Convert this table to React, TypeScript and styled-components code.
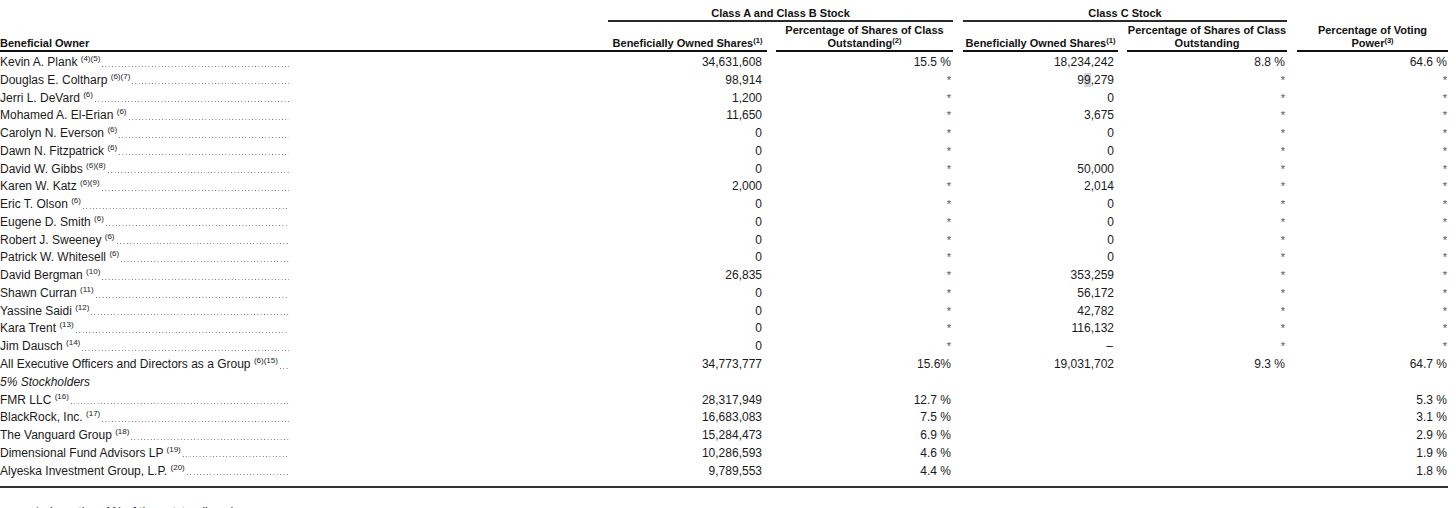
import styled, { createGlobalStyle } from 'styled-components'

const GlobalStyle = createGlobalStyle`
  html, body {
    margin: 0;
    padding: 0;
    background: #ffffff;
  }
  body {
    font-family: "Liberation Sans", Arial, sans-serif;
    color: #1a1a1a;
  }
`

const COLUMNS = '608px 159px 186px 165px 169px 161px'

type Holder = {
  name: string
  notes?: string
  a?: string
  aPct?: string
  c?: string
  cPct?: string
  vote?: string
  italic?: boolean
  mark?: boolean
}

const holders: Holder[] = [
  { name: 'Kevin A. Plank', notes: '(4)(5)', a: '34,631,608', aPct: '15.5 %', c: '18,234,242', cPct: '8.8 %', vote: '64.6 %' },
  { name: 'Douglas E. Coltharp', notes: '(6)(7)', a: '98,914', aPct: '*', c: '99,279', cPct: '*', vote: '*', mark: true },
  { name: 'Jerri L. DeVard', notes: '(6)', a: '1,200', aPct: '*', c: '0', cPct: '*', vote: '*' },
  { name: 'Mohamed A. El-Erian', notes: '(6)', a: '11,650', aPct: '*', c: '3,675', cPct: '*', vote: '*' },
  { name: 'Carolyn N. Everson', notes: '(6)', a: '0', aPct: '*', c: '0', cPct: '*', vote: '*' },
  { name: 'Dawn N. Fitzpatrick', notes: '(6)', a: '0', aPct: '*', c: '0', cPct: '*', vote: '*' },
  { name: 'David W. Gibbs', notes: '(6)(8)', a: '0', aPct: '*', c: '50,000', cPct: '*', vote: '*' },
  { name: 'Karen W. Katz', notes: '(6)(9)', a: '2,000', aPct: '*', c: '2,014', cPct: '*', vote: '*' },
  { name: 'Eric T. Olson', notes: '(6)', a: '0', aPct: '*', c: '0', cPct: '*', vote: '*' },
  { name: 'Eugene D. Smith', notes: '(6)', a: '0', aPct: '*', c: '0', cPct: '*', vote: '*' },
  { name: 'Robert J. Sweeney', notes: '(6)', a: '0', aPct: '*', c: '0', cPct: '*', vote: '*' },
  { name: 'Patrick W. Whitesell', notes: '(6)', a: '0', aPct: '*', c: '0', cPct: '*', vote: '*' },
  { name: 'David Bergman', notes: '(10)', a: '26,835', aPct: '*', c: '353,259', cPct: '*', vote: '*' },
  { name: 'Shawn Curran', notes: '(11)', a: '0', aPct: '*', c: '56,172', cPct: '*', vote: '*' },
  { name: 'Yassine Saidi', notes: '(12)', a: '0', aPct: '*', c: '42,782', cPct: '*', vote: '*' },
  { name: 'Kara Trent', notes: '(13)', a: '0', aPct: '*', c: '116,132', cPct: '*', vote: '*' },
  { name: 'Jim Dausch', notes: '(14)', a: '0', aPct: '*', c: '–', cPct: '*', vote: '*' },
  { name: 'All Executive Officers and Directors as a Group', notes: '(6)(15)', a: '34,773,777', aPct: '15.6%', c: '19,031,702', cPct: '9.3 %', vote: '64.7 %' },
  { name: '5% Stockholders', italic: true },
  { name: 'FMR LLC', notes: '(16)', a: '28,317,949', aPct: '12.7 %', vote: '5.3 %' },
  { name: 'BlackRock, Inc.', notes: '(17)', a: '16,683,083', aPct: '7.5 %', vote: '3.1 %' },
  { name: 'The Vanguard Group', notes: '(18)', a: '15,284,473', aPct: '6.9 %', vote: '2.9 %' },
  { name: 'Dimensional Fund Advisors LP', notes: '(19)', a: '10,286,593', aPct: '4.6 %', vote: '1.9 %' },
  { name: 'Alyeska Investment Group, L.P.', notes: '(20)', a: '9,789,553', aPct: '4.4 %', vote: '1.8 %' },
]

export default function App() {
  return (
    <Page>
      <GlobalStyle />
      <HeadRow>
        <div />
        <GroupHead $span={2} $gap={0}>
          Class A and Class B Stock
        </GroupHead>
        <GroupHead $span={2} $gap={10}>
          Class C Stock
        </GroupHead>
        <div />
      </HeadRow>
      <ColumnRow>
        <OwnerHead>Beneficial Owner</OwnerHead>
        <ColHead $gap={0}>
          Beneficially Owned Shares<HeadSup>(1)</HeadSup>
        </ColHead>
        <ColHead $gap={9}>
          Percentage of Shares of Class
          <br />
          Outstanding<HeadSup>(2)</HeadSup>
        </ColHead>
        <ColHead $gap={10}>
          Beneficially Owned Shares<HeadSup>(1)</HeadSup>
        </ColHead>
        <ColHead $gap={9}>
          Percentage of Shares of Class
          <br />
          Outstanding
        </ColHead>
        <ColHead $gap={10}>
          Percentage of Voting
          <br />
          Power<HeadSup>(3)</HeadSup>
        </ColHead>
      </ColumnRow>

      <Body>
        {holders.map((h) => (
          <DataRow key={h.name}>
            {h.italic ? (
              <SectionLabel>{h.name}</SectionLabel>
            ) : (
              <Owner>
                <Name>
                  {h.name} <NoteSup>{h.notes}</NoteSup>
                </Name>
                <Leader />
              </Owner>
            )}
            <Value $pad={5}>{h.a}</Value>
            <Value $pad={2} $star={h.aPct === '*'}>
              {h.aPct}
            </Value>
            <Value $pad={h.c === '–' ? 5 : 4}>
              {h.mark && h.c ? (
                <>
                  9<Highlight>9</Highlight>,279
                </>
              ) : (
                h.c
              )}
            </Value>
            <Value $pad={2} $star={h.cPct === '*'}>
              {h.cPct}
            </Value>
            <Value $pad={1} $star={h.vote === '*'}>
              {h.vote}
            </Value>
          </DataRow>
        ))}
      </Body>

      <BottomRule />
      <Footnote>*&nbsp;&nbsp;&nbsp;Less than 1% of the outstanding shares.</Footnote>
    </Page>
  )
}

const Page = styled.div`
  width: 1448px;
  font-size: 12px;
`

const HeadRow = styled.div`
  display: grid;
  grid-template-columns: ${COLUMNS};
  align-items: end;
`

const GroupHead = styled.div<{ $span: number; $gap: number }>`
  grid-column: span ${(p) => p.$span};
  margin-left: ${(p) => p.$gap}px;
  padding-top: 7px;
  font-size: 11px;
  font-weight: 700;
  line-height: 13px;
  text-align: center;
  color: #111;
  border-bottom: 2px solid #2a2a2a;
`

const ColumnRow = styled.div`
  display: grid;
  grid-template-columns: ${COLUMNS};
  align-items: end;
  padding-top: 2px;
`

const OwnerHead = styled.div`
  font-size: 11px;
  font-weight: 700;
  line-height: 13px;
  color: #111;
  border-bottom: 2px solid #111;
`

const ColHead = styled.div<{ $gap: number }>`
  margin-left: ${(p) => p.$gap}px;
  font-size: 11px;
  font-weight: 700;
  line-height: 13px;
  text-align: center;
  color: #111;
  border-bottom: 2px solid #111;
  white-space: nowrap;
`

const HeadSup = styled.sup`
  font-size: 7.5px;
  font-weight: 700;
  vertical-align: 4px;
  line-height: 0;
`

const Body = styled.div`
  padding-top: 2px;
`

const DataRow = styled.div`
  display: grid;
  grid-template-columns: ${COLUMNS};
  height: 17.78px;
  line-height: 17.78px;
  white-space: nowrap;
`

const Owner = styled.div`
  display: flex;
  width: 289px;
`

const Name = styled.span`
  flex: none;
`

const NoteSup = styled.sup`
  font-size: 8px;
  vertical-align: 5px;
  line-height: 0;
`

const Leader = styled.span`
  flex: 1;
  min-width: 0;
  margin-left: 1px;
  background-image: linear-gradient(to right, #6a6a6a 0 1.2px, transparent 1.2px);
  background-size: 3.33px 1.2px;
  background-position: 1px 11.6px;
  background-repeat: repeat-x;
`

const SectionLabel = styled.div`
  font-style: italic;
`

const Value = styled.div<{ $pad: number; $star?: boolean }>`
  text-align: right;
  padding-right: ${(p) => p.$pad}px;
  color: ${(p) => (p.$star ? '#555' : '#1a1a1a')};
  font-size: ${(p) => (p.$star ? '11px' : '12px')};
`

const Highlight = styled.span`
  background: #d6d6d6;
`

const BottomRule = styled.div`
  margin-top: 6px;
  border-top: 2px solid #333;
`

const Footnote = styled.div`
  margin-top: 17px;
  padding-left: 35px;
  line-height: 14px;
`
